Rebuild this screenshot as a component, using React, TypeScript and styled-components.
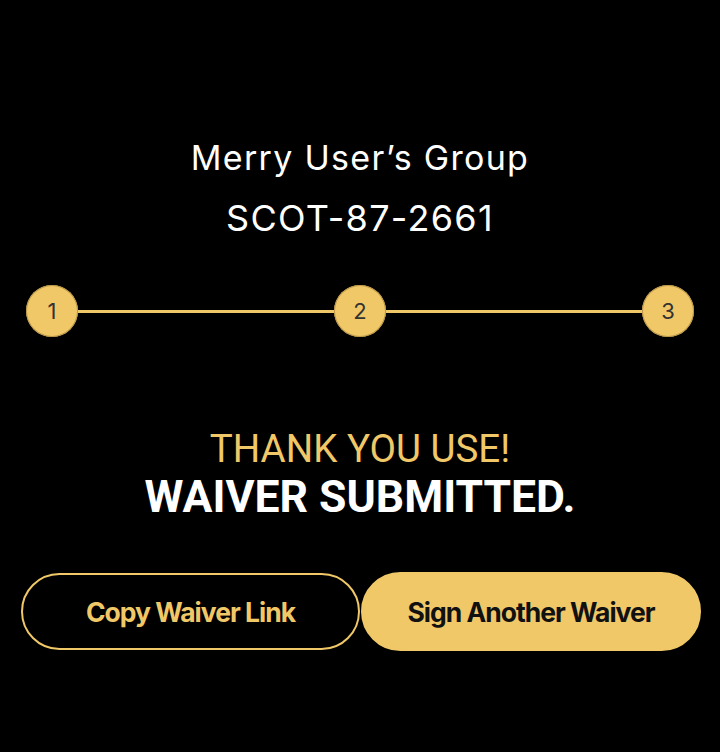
import React from "react";
import styled, { createGlobalStyle } from "styled-components";

const GOLD = "#f0c868";

const Global = createGlobalStyle`
  html, body { margin: 0; padding: 0; background: #000; }
  body { font-family: Inter, "Noto Sans", sans-serif; }
`;

const Page = styled.main`
  width: 720px;
  height: 752px;
  background: #000;
  box-sizing: border-box;
  padding: 127px 0 0;
  display: flex;
  flex-direction: column;
  align-items: center;
`;

const Title = styled.h1<{ $size: number }>`
  margin: 0;
  font-family: Inter, sans-serif;
  font-weight: 400;
  font-size: ${(p) => p.$size}px;
  line-height: 61px;
  letter-spacing: 1.3px;
  color: #fff;
  text-align: center;
`;

const Stepper = styled.div`
  width: 668px;
  margin-top: 36px;
  display: flex;
  align-items: center;
`;

const Step = styled.div`
  width: 52px;
  height: 52px;
  flex: none;
  border-radius: 50%;
  background: ${GOLD};
  box-shadow: inset 0 0 0 1px #b8964a;
  display: flex;
  align-items: center;
  justify-content: center;
  font-family: Inter, sans-serif;
  font-size: 22px;
  color: #333;
`;

const Line = styled.div`
  flex: 1;
  height: 3px;
  background: ${GOLD};
`;

const Message = styled.section`
  margin-top: 89px;
  display: flex;
  flex-direction: column;
  align-items: center;
  font-family: Roboto, sans-serif;
`;

const Thanks = styled.div`
  font-size: 38.5px;
  font-weight: 400;
  line-height: 46px;
  color: ${GOLD};
`;

const Submitted = styled.div`
  font-size: 44.5px;
  font-weight: 700;
  line-height: 50px;
  color: #fff;
`;

const Actions = styled.div`
  margin-top: 50px;
  align-self: flex-start;
  margin-left: 21px;
  display: grid;
  grid-template-columns: 339px 340px;
  column-gap: 1px;
  align-items: center;
`;

const Button = styled.button<{ $solid?: boolean }>`
  height: ${(p) => (p.$solid ? 79 : 77)}px;
  border-radius: 40px;
  box-sizing: border-box;
  border: 2px solid ${GOLD};
  background: ${(p) => (p.$solid ? GOLD : "#000")};
  color: ${(p) => (p.$solid ? "#111" : GOLD)};
  font-family: Inter, sans-serif;
  font-weight: 700;
  font-size: 26.5px;
  letter-spacing: -1px;
  cursor: pointer;
`;

export default function App() {
  return (
    <>
      <Global />
      <Page>
        <Title $size={34}>Merry User’s Group</Title>
        <Title $size={36}>SCOT-87-2661</Title>
        <Stepper>
          <Step>1</Step>
          <Line />
          <Step>2</Step>
          <Line />
          <Step>3</Step>
        </Stepper>
        <Message>
          <Thanks>THANK YOU USE!</Thanks>
          <Submitted>WAIVER SUBMITTED.</Submitted>
        </Message>
        <Actions>
          <Button>Copy Waiver Link</Button>
          <Button $solid>Sign Another Waiver</Button>
        </Actions>
      </Page>
    </>
  );
}
